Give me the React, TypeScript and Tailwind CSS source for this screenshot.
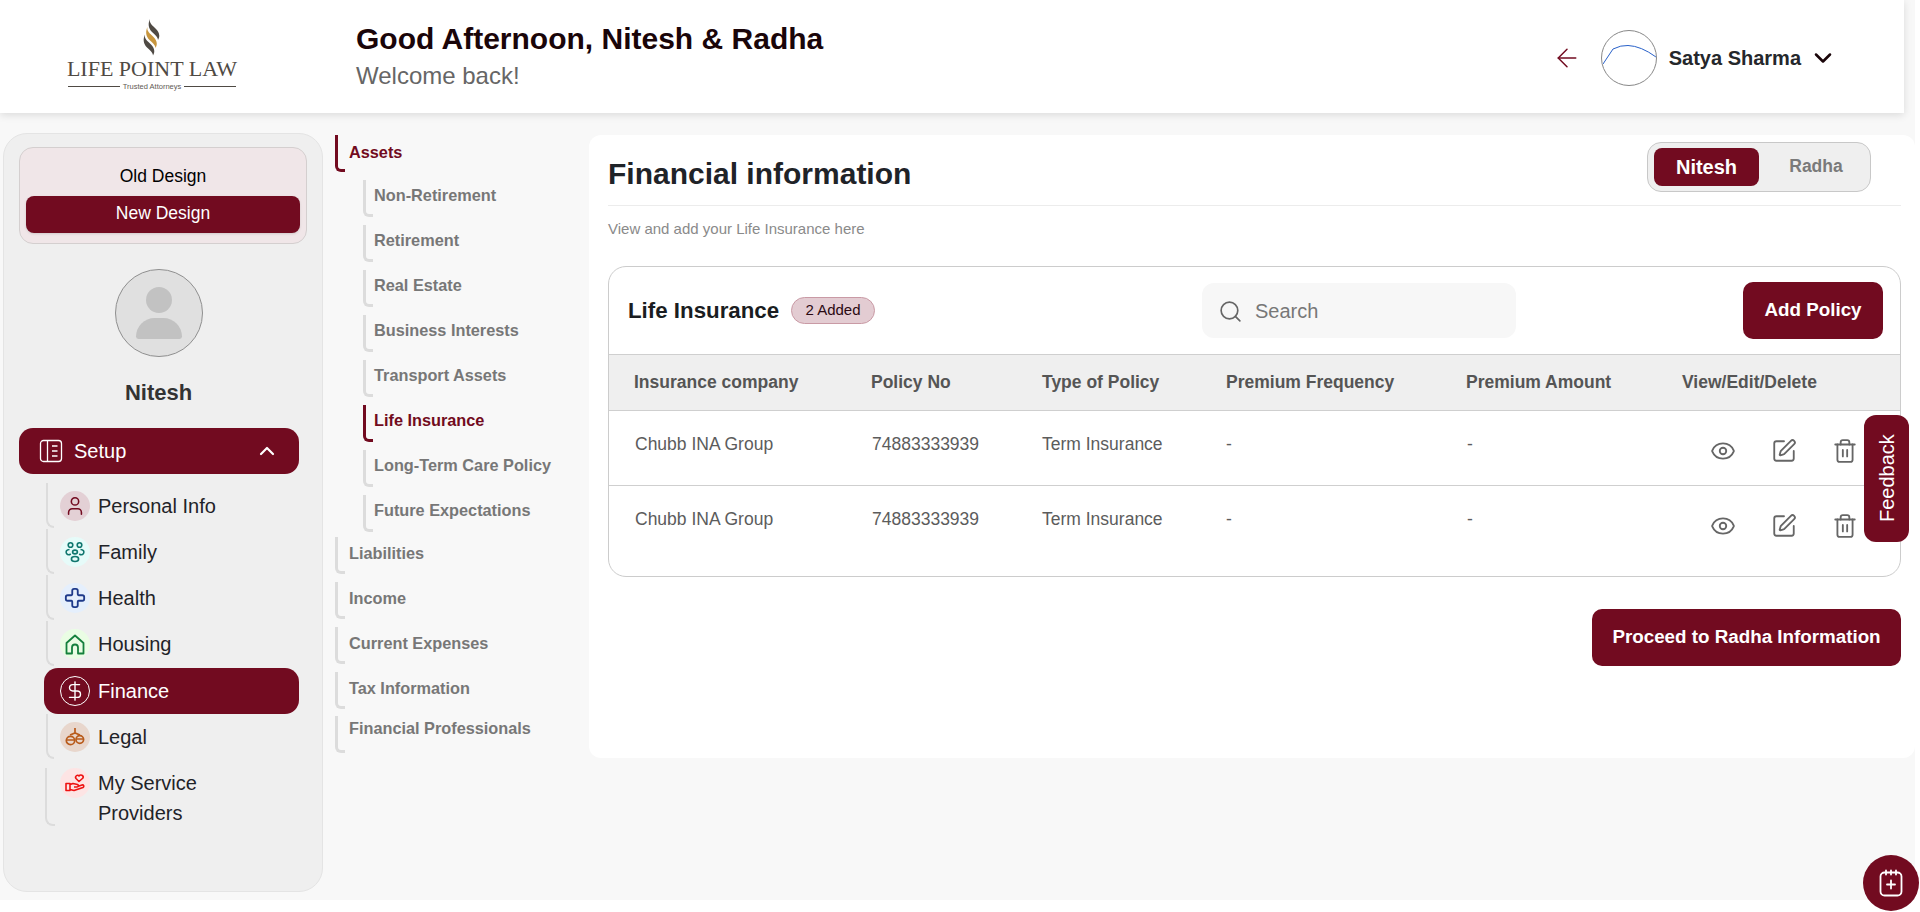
import type { ReactNode } from "react"
import { ChevronDown, ChevronUp, ArrowLeft, Eye, SquarePen, Trash2, Search, User, Cross, DollarSign } from "lucide-react"

const assets = ["Non-Retirement", "Retirement", "Real Estate", "Business Interests", "Transport Assets", "Life Insurance", "Long-Term Care Policy", "Future Expectations"]
const otherSections = ["Liabilities", "Income", "Current Expenses", "Tax Information"]

const FamilyIcon = () => (
  <svg width="22" height="22" viewBox="0 0 22 22" fill="none" stroke="currentColor" strokeWidth="1.6">
    <circle cx="6.5" cy="4" r="2.3" />
    <circle cx="15.500" cy="4" r="2.3" />
    <ellipse cx="11" cy="11" rx="2.4" ry="1.9" />
    <ellipse cx="11" cy="18" rx="3.6" ry="2.5" />
    <path d="M5.500 8.500C2.500 8.500 1.500 10.500 2.500 12.500C3.500 13.800 5.500 13.800 6.800 13M16.500 8.500C19.500 8.500 20.500 10.500 19.500 12.500C18.500 13.800 16.500 13.800 15.200 13" />
  </svg>
)

const SetupIcon = () => (
  <svg width="24" height="24" viewBox="0 0 24 24" fill="none" stroke="currentColor" strokeWidth="1.3">
    <rect x="1.5" y="1.5" width="21" height="21" rx="3" />
    <path d="M8.5 1.5v21M13 7h5.5M13 12h5.5M13 17h5.5" />
  </svg>
)

const HouseIcon = () => (
  <svg width="20" height="21" viewBox="0 0 20 21" fill="none" stroke="currentColor" strokeWidth="1.8" strokeLinejoin="round">
    <path d="M1.500 9 10 1.500 18.500 9v10.500h-5.500v-6a3 3 0 0 0-6 0v6H1.500z" />
  </svg>
)

const ScaleIcon = () => (
  <svg width="20" height="18" viewBox="0 0 20 18" fill="none" stroke="currentColor" strokeWidth="1.7">
    <path d="M10 0v6M5 7l5-2 5 2" />
    <circle cx="5.500" cy="12.500" r="4.200" />
    <circle cx="14.800" cy="11.500" r="3.800" />
    <path d="M1.500 12h8M11 11h7.500" />
  </svg>
)

const ServiceIcon = () => (
  <svg width="20" height="20" viewBox="0 0 20 20" fill="none" stroke="currentColor" strokeWidth="1.6" strokeLinejoin="round">
    <path d="M1 10.500h4v7H1zM5 11.500l3-1 4.500 1c1.500.5 1 2.500-.5 2.500H9M5 16.500l4 1 9-3c1.500-1 .5-3-1-2.500l-4.500 1.500" />
    <path d="M14 8.500 11 5.500C9.500 3.500 12.500 1 14 3c1.500-2 5-.5 4 2z" />
  </svg>
)

const CalendarIcon = () => (
  <svg width="24" height="28" viewBox="0 0 24 28" fill="none" stroke="currentColor" strokeWidth="1.8" strokeLinecap="round">
    <rect x="1.500" y="3.500" width="21" height="23" rx="4" />
    <path d="M7 1.500v4M12 1.500v4M17 1.500v4M12 11.500v8M8 15.500h8" />
  </svg>
)

const Ribbon = ({ fill, dx, dy }: { fill: string; dx: number; dy: number }) => (
  <path
    transform={`translate(${dx} ${dy})`}
    fill={fill}
    d="M7 0C6 4 9 6 13 10C17 14 17 18 15 21C15 18 12 16 9 13C5 9 5 4 7 0Z"
  />
)

const Logo = () => (
  <div className="-mt-[3px] flex w-[168px] flex-col items-center">
    <svg width="18" height="37" viewBox="0 0 18 37">
      <Ribbon fill="#4f4a44" dx={0} dy={0} />
      <Ribbon fill="#c8963e" dx={-2.5} dy={8} />
      <Ribbon fill="#4f4a44" dx={-5} dy={15.5} />
    </svg>
    <div className="mt-[3px] whitespace-nowrap font-['Liberation_Serif',serif] text-[22px] leading-[20px] text-[#4f4a44]">LIFE POINT LAW</div>
    <div className="mt-[3px] flex w-full items-center gap-[3px]">
      <div className="h-px flex-1 bg-[#4f4a44]"></div>
      <div className="text-[7.5px] leading-[10px] text-[#5f5a54]">Trusted Attorneys</div>
      <div className="h-px flex-1 bg-[#4f4a44]"></div>
    </div>
  </div>
)

const SideRow = ({ label, circle, children }: { label: string; circle: string; children: ReactNode }) => (
  <div className="flex h-[46px]">
    <div className="mb-[1px] w-[8px] rounded-bl-[8px] border-b-2 border-l-2 border-[#dcdcdc]"></div>
    <div className="ml-[6px] flex items-center">
      <div className={`flex h-[30px] w-[30px] shrink-0 items-center justify-center rounded-full ${circle}`}>{children}</div>
      <span className="ml-[8px]">{label}</span>
    </div>
  </div>
)

const NavItem = ({ label, active, gap, pt }: { label: string; active?: boolean; gap: string; pt: string }) => (
  <div className={`flex h-[37px] ${active ? "text-[#720b20]" : ""}`}>
    <div className={`w-[10px] shrink-0 rounded-bl-[6px] border-b-[3px] border-l-[3px] ${active ? "border-[#720b20]" : "border-[#dcdcdc]"}`}></div>
    <div className={`${gap} ${pt} whitespace-nowrap leading-[24px]`}>{label}</div>
  </div>
)

const Policy = () => (
  <div className="flex h-[75px] items-start border-b border-[#cfcfcf] text-[17.5px] leading-[22px] text-[#5c5c5c] last:border-b-0">
    <div className="w-[262px] pl-[26px] pt-[22px]">Chubb INA Group</div>
    <div className="w-[171px] pl-[1px] pt-[22px]">74883333939</div>
    <div className="w-[184px] pt-[22px]">Term Insurance</div>
    <div className="w-[240px] pt-[22px]">-</div>
    <div className="w-[216px] pl-[1px] pt-[22px]">-</div>
    <div className="flex gap-[35px] pl-[28px] pt-[27px] text-[#666]">
      <Eye size={26} strokeWidth={1.7} />
      <SquarePen size={26} strokeWidth={1.7} />
      <Trash2 size={26} strokeWidth={1.7} />
    </div>
  </div>
)

export default function App() {
  return (
    <div className="relative h-[912px] w-full overflow-hidden bg-white font-['Liberation_Sans',sans-serif]">
      <div className="flex h-[900px] w-[1915px] flex-col bg-[#f8f8f8]">
        <header className="z-10 flex h-[113px] w-[1904px] shrink-0 items-center bg-white pr-[67px] shadow-[0_2px_8px_rgba(0,0,0,0.12)]">
          <div className="flex w-[356px] justify-start pl-[68px]"><Logo /></div>
          <div className="-mt-[2px] flex-1">
            <div className="text-[30px] font-bold leading-[38px] text-[#1a0509]">Good Afternoon, Nitesh &amp; Radha</div>
            <div className="mt-[2px] text-[24px] leading-[32px] text-[#666]">Welcome back!</div>
          </div>
          <div className="mt-[2px] flex items-center">
            <ArrowLeft size={30} strokeWidth={1.2} className="text-[#720b20]" />
            <div className="ml-[19px] h-[56px] w-[56px] overflow-hidden rounded-full border border-[#888] bg-white">
              <svg width="54" height="54" viewBox="0 0 54 54" fill="none"><path d="M1 33 11 18Q19 14 26 14.500Q39 15 54 26" stroke="#2860c8" strokeWidth="1" /></svg>
            </div>
            <div className="ml-[12px] text-[20px] font-bold text-[#25272b]">Satya Sharma</div>
            <ChevronDown size={28} strokeWidth={2.2} className="ml-[8px] text-[#1a0509]" />
          </div>
        </header>

        <div className="flex flex-1">
          <aside className="ml-[3px] mt-[20px] h-[759px] w-[320px] rounded-[24px] border border-[#e4e4e4] bg-[#efefef] px-[15px] pt-[13px]">
            <div className="flex h-[97px] w-[288px] flex-col items-center rounded-[14px] border border-[#d4cfcf] bg-[#f0e6e8] px-[6px]">
              <div className="flex h-[48px] w-full items-center justify-center pt-[8px] text-[17.5px] text-black">Old Design</div>
              <div className="flex h-[37px] w-full items-center justify-center rounded-[8px] bg-[#720b20] pb-[2px] text-[17.5px] text-white shadow-sm">New Design</div>
            </div>
            <div className="mt-[25px] flex flex-col items-center pr-[9px]">
              <div className="flex h-[88px] w-[88px] flex-col items-center rounded-full border border-[#8f8f8f] bg-[#e0e0e0]">
                <div className="mt-[17px] h-[26px] w-[26px] rounded-full bg-[#c2c2c2]"></div>
                <div className="mt-[5px] h-[21px] w-[46px] rounded-b-[3px] rounded-t-[23px] bg-[#c2c2c2]"></div>
              </div>
              <div className="mt-[22px] text-[22px] font-bold leading-[28px] text-[#333]">Nitesh</div>
            </div>
            <div className="mt-[21px] flex h-[46px] w-[280px] items-center rounded-[14px] bg-[#720b20] pl-[20px] pr-[20px] text-white">
              <SetupIcon />
              <span className="ml-[11px] flex-1 text-[20px]">Setup</span>
              <ChevronUp size={24} strokeWidth={2.2} />
            </div>
            <div className="mt-[9px] flex w-[280px] flex-col pl-[27px] text-[20px] text-[#1f2328]">
              <SideRow label="Personal Info" circle="bg-[#e3d0d5] text-[#720b20]"><User size={22} strokeWidth={1.7} /></SideRow>
              <SideRow label="Family" circle="bg-[#e6fbf9] text-[#0f766e]"><FamilyIcon /></SideRow>
              <SideRow label="Health" circle="bg-[#e5effc] text-[#1e3a8a]"><Cross size={22} strokeWidth={2} /></SideRow>
              <SideRow label="Housing" circle="bg-[#eafde4] text-[#15803d]"><HouseIcon /></SideRow>
              <div className="-ml-[2px] mt-[1px] flex h-[46px] items-center rounded-[14px] bg-[#720b20] pl-[16px] text-white">
                <div className="flex h-[30px] w-[30px] shrink-0 items-center justify-center rounded-full border border-white">
                  <DollarSign size={22} strokeWidth={1.5} />
                </div>
                <span className="ml-[8px]">Finance</span>
              </div>
              <SideRow label="Legal" circle="bg-[#e8d6cc] text-[#b85a1a]"><ScaleIcon /></SideRow>
              <div className="-ml-[1px] mt-[8px] flex h-[58px]">
                <div className="w-[10px] rounded-bl-[8px] border-b-2 border-l-2 border-[#dcdcdc]"></div>
                <div className="ml-[5px] flex h-[30px] w-[30px] shrink-0 items-center justify-center rounded-full bg-[#fde4e4] text-[#ee1111]">
                  <ServiceIcon />
                </div>
                <span className="ml-[8px] w-[130px] leading-[30px]">My Service Providers</span>
              </div>
            </div>
          </aside>

          <nav className="ml-[12px] mt-[22px] w-[254px] text-[16.3px] font-bold text-[#777]">
            <NavItem label="Assets" active gap="ml-[4px]" pt="pt-[5px]" />
            <div className="mt-[8px] flex flex-col gap-[8px] pl-[28px]">
              {assets.map((a) => (
                <NavItem key={a} label={a} active={a === "Life Insurance"} gap="ml-[1px]" pt="pt-[3px]" />
              ))}
            </div>
            <div className="mt-[5px] flex flex-col gap-[8px]">
              {otherSections.map((s) => (
                <NavItem key={s} label={s} gap="ml-[4px]" pt="pt-[4px]" />
              ))}
              <div className="-mt-[1px]">
                <NavItem label="Financial Professionals" gap="ml-[4px]" pt="pt-0" />
              </div>
            </div>
          </nav>

          <main className="mt-[22px] h-[623px] flex-1 rounded-[12px] bg-white pl-[19px] pr-[14px]">
            <div className="flex h-[71px] items-center justify-between border-b border-[#ececec] pr-[30px]">
              <h1 className="pt-[6px] text-[30px] font-bold text-[#1f2328]">Financial information</h1>
              <div className="mb-[7px] flex h-[50px] w-[224px] items-center rounded-[14px] border border-[#c8c8c8] bg-[#efefef] pl-[6px]">
                <div className="flex h-[38px] w-[105px] items-center justify-center rounded-[8px] bg-[#720b20] text-[20px] font-bold text-white">Nitesh</div>
                <div className="flex-1 pl-[3px] text-center text-[17.5px] font-bold text-[#7a7a7a]">Radha</div>
              </div>
            </div>
            <p className="mt-[13px] text-[15px] leading-[20px] text-[#8a8a8a]">View and add your Life Insurance here</p>
            <section className="mt-[27px] h-[311px] w-[1293px] overflow-hidden rounded-[18px] border border-[#cccccc]">
              <div className="flex h-[87px] items-center pl-[19px] pr-[17px]">
                <h2 className="w-[152px] whitespace-nowrap text-[22.3px] font-bold text-[#1a1d21]">Life Insurance</h2>
                <span className="ml-[11px] flex h-[27px] w-[84px] items-center justify-center rounded-full border border-[#c99aa5] bg-[#e3ccd2] text-[15px] text-[#2b0a12]">2 Added</span>
                <div className="ml-[327px] flex h-[55px] w-[314px] items-center rounded-[12px] bg-[#f7f7f7] pl-[16px] pt-[1px] text-[#666]">
                  <Search size={25} strokeWidth={1.6} />
                  <span className="ml-[12px] text-[20px] text-[#777]">Search</span>
                </div>
                <button className="ml-auto h-[57px] w-[140px] rounded-[10px] bg-[#720b20] text-[18.8px] font-bold text-white">Add Policy</button>
              </div>
              <div className="flex h-[57px] items-center border-y border-[#cfcfcf] bg-[#efefef] text-[17.5px] font-bold text-[#555]">
                <div className="w-[262px] pl-[25px]">Insurance company</div>
                <div className="w-[171px]">Policy No</div>
                <div className="w-[184px]">Type of Policy</div>
                <div className="w-[240px]">Premium Frequency</div>
                <div className="w-[216px]">Premium Amount</div>
                <div>View/Edit/Delete</div>
              </div>
              <Policy />
              <Policy />
            </section>
            <div className="mt-[32px] flex w-[1293px] justify-end">
              <button className="h-[57px] w-[309px] rounded-[10px] bg-[#720b20] text-[18.8px] font-bold text-white">Proceed to Radha Information</button>
            </div>
          </main>
        </div>
      </div>

      <div className="absolute left-[1864px] top-[415px] flex h-[127px] w-[45px] rotate-180 items-center justify-center rounded-[12px] bg-[#720b20] text-[20px] text-white [writing-mode:vertical-rl]">Feedback</div>
      <div className="absolute left-[1863px] top-[855px] flex h-[56px] w-[56px] items-center justify-center rounded-full bg-[#720b20] text-white">
        <CalendarIcon />
      </div>
    </div>
  )
}
